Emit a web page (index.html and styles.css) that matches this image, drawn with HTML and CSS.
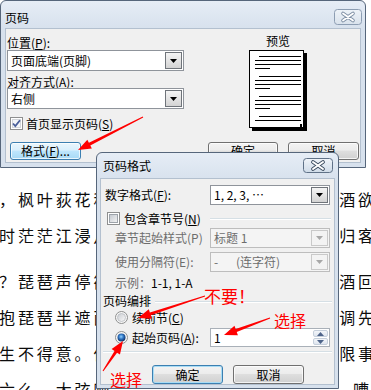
FILE: index.html
```html
<!DOCTYPE html>
<html lang="zh-CN">
<head>
<meta charset="utf-8">
<title>页码</title>
<link rel="stylesheet" href="styles.css">
</head>
<body>
<svg class="defs" width="0" height="0" aria-hidden="true">
  <defs>
    <linearGradient id="gBox" x1="0" y1="0" x2="1" y2="1">
      <stop offset="0" stop-color="#c3c8cf"/>
      <stop offset="1" stop-color="#f4f4f4"/>
    </linearGradient>
    <linearGradient id="gRadio" x1="0" y1="0" x2="1" y2="1">
      <stop offset="0" stop-color="#c9ccd1"/>
      <stop offset="1" stop-color="#fafafa"/>
    </linearGradient>
    <radialGradient id="gDot" cx="0.45" cy="0.4" r="0.6">
      <stop offset="0" stop-color="#8fd0ff"/>
      <stop offset="0.5" stop-color="#2f73c0"/>
      <stop offset="1" stop-color="#0f2f63"/>
    </radialGradient>
    <linearGradient id="gCloseA" x1="0" y1="0" x2="0" y2="1">
      <stop offset="0" stop-color="#f0f4f9"/>
      <stop offset="1" stop-color="#cfdbe8"/>
    </linearGradient>
    <linearGradient id="gCloseI" x1="0" y1="0" x2="0" y2="1">
      <stop offset="0" stop-color="#eef3f8"/>
      <stop offset="1" stop-color="#d9e2ec"/>
    </linearGradient>
  </defs>
</svg>
<div class="screen">
  <div class="doc">
    <div class="para para-first">
      <div class="ln"><span>，枫叶荻花秋</span><span class="gap"></span><span>酒欲</span></div>
      <div class="ln"><span>时茫茫江浸月</span><span class="gap"></span><span>归客</span></div>
    </div>
    <div class="para">
      <div class="ln"><span>？琵琶声停欲</span><span class="gap"></span><span>酒回</span></div>
      <div class="ln"><span>抱琵琶半遮面</span><span class="gap"></span><span>调先</span></div>
      <div class="ln"><span>生不得意。低</span><span class="gap"></span><span>限事</span></div>
      <div class="ln"><span>六么。大弦嘈</span><span class="gap gap-wide"></span><span>嘈</span></div>
    </div>
  </div>

  <section class="win win-page">
    <header class="titlebar">
      <span class="title">页码</span>
      <span class="close close-inactive">
        <svg width="28" height="16" viewBox="0 0 28 16">
          <rect x="0.5" y="0.5" width="27" height="15" rx="3" fill="url(#gCloseI)" stroke="#8c9db2"/>
          <path d="M9 4.5L19 11.5M19 4.5L9 11.5" stroke="#7d8ea3" stroke-width="3.6" stroke-linecap="round"/>
          <path d="M9 4.5L19 11.5M19 4.5L9 11.5" stroke="#fff" stroke-width="1.8" stroke-linecap="round"/>
        </svg>
      </span>
    </header>
    <div class="win-body page-body">
      <div class="page-grid">
        <div class="page-fields">
          <div class="lbl lbl-first">位置(<u>P</u>):</div>
          <div class="combo">
            <span class="combo-text">页面底端(页脚)</span>
            <span class="drop"><svg width="7" height="4" viewBox="0 0 7 4"><polygon points="0,0 7,0 3.5,4" fill="#000"/></svg></span>
          </div>
          <div class="lbl lbl-second">对齐方式(<u>A</u>):</div>
          <div class="combo">
            <span class="combo-text">右侧</span>
            <span class="drop"><svg width="7" height="4" viewBox="0 0 7 4"><polygon points="0,0 7,0 3.5,4" fill="#000"/></svg></span>
          </div>
          <div class="check-row">
            <svg class="chk" width="13" height="13" viewBox="0 0 13 13">
              <rect x="0.5" y="0.5" width="12" height="12" fill="#fff" stroke="#8e8f8f"/>
              <rect x="2.5" y="2.5" width="8" height="8" fill="#f4f6f8" stroke="#d3d6da"/>
              <path d="M3 6.5L5.3 9L10 3.2" stroke="#4a5f9a" stroke-width="1.8" fill="none"/>
            </svg>
            <span>首页显示页码(<u>S</u>)</span>
          </div>
        </div>
        <div class="preview">
          <div class="preview-title">预览</div>
          <svg class="preview-page" width="58" height="81" viewBox="0 0 58 81">
            <rect x="3" y="3" width="55" height="78" fill="#000"/>
            <rect x="0.5" y="0.5" width="54" height="77" fill="#fff" stroke="#000"/>
            <path d="M10 6.5H52M6 10.5H52M6 14.5H52M6 18.5H21M10 26.5H52M6 30.5H52M6 34.5H52M6 38.5H21M10 46.5H52M6 50.5H52M6 54.5H52M6 58.5H21M10 66.5H52M6 70.5H52" stroke="#000" stroke-width="1"/>
            <rect x="51" y="74" width="2" height="3" fill="#000"/>
          </svg>
        </div>
      </div>
      <div class="btn-row">
        <button class="btn btn-hot">格式(<u>F</u>)...</button>
        <span class="spacer"></span>
        <button class="btn">确定</button>
        <button class="btn">取消</button>
      </div>
    </div>
  </section>

  <section class="win win-fmt">
    <header class="titlebar">
      <span class="title">页码格式</span>
      <span class="close close-active">
        <svg width="30" height="15" viewBox="0 0 30 15">
          <rect x="0.5" y="0.5" width="29" height="14" rx="3" fill="url(#gCloseA)" stroke="#5f7187"/>
          <path d="M10 4L20 11M20 4L10 11" stroke="#3a4a5e" stroke-width="3.8" stroke-linecap="round"/>
          <path d="M10 4L20 11M20 4L10 11" stroke="#fff" stroke-width="2" stroke-linecap="round"/>
        </svg>
      </span>
    </header>
    <div class="win-body fmt-body">
      <div class="fmt-row row-num">
        <span class="lbl ind-4">数字格式(<u>F</u>):</span>
        <div class="combo">
          <span class="combo-text">1, 2, 3, …</span>
          <span class="drop"><svg width="7" height="4" viewBox="0 0 7 4"><polygon points="0,0 7,0 3.5,4" fill="#000"/></svg></span>
        </div>
      </div>
      <div class="fmt-row row-chk">
        <span class="opt ind-6">
          <svg class="chk" width="13" height="13" viewBox="0 0 13 13">
            <rect x="0.5" y="0.5" width="12" height="12" fill="#fff" stroke="#8e8f8f"/>
            <rect x="2.5" y="2.5" width="8" height="8" fill="url(#gBox)" stroke="#9da3aa"/>
          </svg>
          <span>包含章节号(<u>N</u>)</span>
        </span>
        <span class="rule"></span>
      </div>
      <div class="fmt-row row-dis">
        <span class="lbl ind-14 dim">章节起始样式(P)</span>
        <div class="combo combo-dis">
          <span class="combo-text">标题 1</span>
          <span class="drop"><svg width="7" height="4" viewBox="0 0 7 4"><polygon points="0,0 7,0 3.5,4" fill="#a7a7a7"/></svg></span>
        </div>
      </div>
      <div class="fmt-row row-dis2">
        <span class="lbl ind-14 dim">使用分隔符(E):</span>
        <div class="combo combo-dis">
          <span class="combo-text"><span class="dash">-</span>(连字符)</span>
          <span class="drop"><svg width="7" height="4" viewBox="0 0 7 4"><polygon points="0,0 7,0 3.5,4" fill="#a7a7a7"/></svg></span>
        </div>
      </div>
      <div class="lbl example ind-14"><span class="dim">示例：</span>1-1, 1-A</div>
      <div class="group-head">
        <span class="lbl">页码编排</span>
        <span class="rule"></span>
      </div>
      <div class="opt radio-row ind-14">
        <svg class="radio" width="13" height="13" viewBox="0 0 13 13">
          <circle cx="6.5" cy="6.5" r="6" fill="#f6f6f6" stroke="#8e8f8f"/>
          <circle cx="6.5" cy="6.5" r="4" fill="url(#gRadio)" stroke="#b9bdc2" stroke-width="0.8"/>
        </svg>
        <span>续前节(<u>C</u>)</span>
      </div>
      <div class="fmt-row row-start">
        <span class="opt ind-14">
          <svg class="radio" width="13" height="13" viewBox="0 0 13 13">
            <circle cx="6.5" cy="6.5" r="6" fill="#f6f6f6" stroke="#8e8f8f"/>
            <circle cx="6.5" cy="6.5" r="4" fill="url(#gDot)"/>
          </svg>
          <span>起始页码(<u>A</u>):</span>
        </span>
        <div class="spin">
          <span class="spin-text">1</span>
          <span class="spin-btns">
            <span class="sb"><svg width="7" height="4" viewBox="0 0 7 4"><polygon points="0,4 7,4 3.5,0" fill="#4e648a"/></svg></span>
            <span class="sb"><svg width="7" height="4" viewBox="0 0 7 4"><polygon points="0,0 7,0 3.5,4" fill="#4e648a"/></svg></span>
          </span>
        </div>
      </div>
      <div class="sep"></div>
      <div class="btn-row fmt-btns">
        <button class="btn btn-default">确定</button>
        <button class="btn">取消</button>
      </div>
    </div>
  </section>

  <svg class="annot" width="371" height="390" viewBox="0 0 371 390">
    <g fill="#ff0000">
      <polygon points="142.77,116.55 88.91,142.77 87.33,139.65 78,150 91.85,148.57 90.27,145.45 143.23,117.45"/>
      <polygon points="204.84,295.52 149.88,312.52 148.79,309.19 138,318 151.91,318.69 150.82,315.37 205.16,296.48"/>
      <polygon points="269.83,317.53 235.67,329.08 234.46,325.80 224,335 237.92,335.18 236.71,331.90 270.17,318.47"/>
      <polygon points="103.42,371.28 117.04,352.65 119.95,354.59 123,341 111.63,349.05 114.54,350.99 102.58,370.72"/>
    </g>
  </svg>
  <span class="note note-no">不要！</span>
  <span class="note note-pick1">选择</span>
  <span class="note note-pick2">选择</span>
</div>
</body>
</html>
```
FILE: styles.css
```css
* { box-sizing: border-box; margin: 0; padding: 0; }
html, body { width: 371px; height: 390px; overflow: hidden; background: #fff; }
body {
  font-family: "Noto Sans CJK SC", "Noto Sans", sans-serif;
  font-size: 12px;
  color: #000;
}
.defs { position: absolute; width: 0; height: 0; }
.screen { position: relative; width: 371px; height: 390px; overflow: hidden; }

/* background document */
.doc {
  padding-top: 181px;
  margin-left: -1px;
  font-size: 16px;
  letter-spacing: 2.9px;
  line-height: 36px;
  white-space: nowrap;
  color: #0c0c0c;
}
.para-first { margin-bottom: 10px; }
.ln { display: block; }
.gap { display: inline-block; width: 226.8px; }
.gap-wide { width: 240.6px; }

/* windows */
.win {
  position: absolute;
  display: flex;
  flex-direction: column;
  border: 1px solid #56667b;
  border-radius: 6px 6px 0 0;
  background: linear-gradient(#e6edf6, #d7e1ed 28px, #d7e1ed);
}
.win-page { left: 0; top: 0; width: 366px; height: 168px; padding: 0 4px 4px; }
.win-fmt { left: 96px; top: 152px; width: 243px; height: 237px; padding: 0 3px 3px; }

.titlebar { display: flex; justify-content: space-between; flex: none; }
.title { line-height: 14px; height: 14px; white-space: nowrap; }
.close { display: block; line-height: 0; }
.win-page .titlebar { height: 27px; align-items: flex-end; padding-bottom: 3px; }
.win-page .close { margin-right: -1px; }
.win-fmt .titlebar { height: 25px; align-items: center; padding-left: 3px; }
.win-fmt .close { margin-right: 2px; }

.win-body {
  flex: 1;
  background: #f0f0f0;
  border: 1px solid #b3c0cf;
  display: flex;
  flex-direction: column;
}

/* common controls */
.lbl { display: block; line-height: 14px; height: 14px; white-space: nowrap; }
.dim { color: #6d6d6d; }
u { text-decoration: underline; text-underline-offset: 1px; }

.combo {
  display: flex;
  align-items: stretch;
  height: 21px;
  border: 1px solid #8f949b;
  background: #fff;
}
.combo-text { flex: 1; padding-left: 3px; line-height: 19px; white-space: nowrap; overflow: hidden; }
.drop {
  width: 17px;
  margin: 1px;
  border: 1px solid #6f747a;
  background: linear-gradient(#f4f4f4, #e4e4e4 50%, #d3d3d3);
  display: flex;
  align-items: center;
  justify-content: center;
}
.combo-dis { border-color: #bdbdbd; background: #f4f4f4; color: #6d6d6d; }
.combo-dis .drop { border-color: #c9c9c9; background: #f3f3f3; }
.dash { display: inline-block; width: 22px; }

.btn {
  height: 18px;
  font: 12px/16px "Noto Sans CJK SC", sans-serif;
  color: #000;
  border: 1px solid #707070;
  border-radius: 3px;
  background: linear-gradient(#f3f3f3, #ececec 45%, #dedede 50%, #d0d0d0);
  box-shadow: inset 0 0 0 1px rgba(255, 255, 255, 0.75);
  width: 71px;
}
.btn-hot {
  border-color: #3c7fb1;
  background: linear-gradient(#eaf6fd, #d9effc 45%, #bee6fd 50%, #a7d9f5);
}
.btn-default {
  border-color: #3c7fb1;
  box-shadow: inset 0 0 0 1px #a8dcf5;
}

.chk, .radio { display: block; flex: none; }
.opt { display: flex; align-items: center; gap: 4px; white-space: nowrap; }

/* page dialog */
.page-body { padding: 7px 1px 0 1px; }
.page-grid { display: grid; grid-template-columns: 177px 58px; column-gap: 65px; }
.page-fields { display: flex; flex-direction: column; }
.lbl-second { margin-top: 4px; height: 13px; line-height: 13px; }
.check-row { display: flex; align-items: center; gap: 3px; margin-top: 8px; height: 13px; padding-left: 3px; white-space: nowrap; }
.preview { display: flex; flex-direction: column; align-items: center; }
.preview-title { line-height: 14px; height: 14px; margin-top: -2px; }
.preview-page { display: block; margin-top: 2px; }
.btn-row { display: flex; align-items: center; gap: 10px; }
.page-body .btn-row { margin-top: 11px; padding-left: 3px; }
.spacer { flex: 1; }
.page-body .btn-row .btn:nth-of-type(2) { width: 70px; }

/* format dialog */
.fmt-body { padding-top: 6px; }
.fmt-row { display: grid; grid-template-columns: 109px 120px; align-items: center; }
.ind-4 { padding-left: 4px; }
.ind-6 { padding-left: 6px; }
.ind-14 { padding-left: 14px; }
.row-num { height: 20px; }
.row-num .combo, .row-dis .combo, .row-dis2 .combo { height: 20px; }
.row-num .combo-text, .row-dis .combo-text, .row-dis2 .combo-text { line-height: 18px; }
.row-chk { margin-top: 5px; height: 13px; }
.rule { display: block; height: 2px; border-top: 1px solid #d5dfe5; border-bottom: 1px solid #fff; }
.row-chk .rule { margin-right: -1px; }
.row-dis { margin-top: 5px; height: 20px; }
.row-dis2 { margin-top: 4px; height: 20px; }
.example { margin-top: 4px; }
.group-head { display: flex; align-items: center; margin-top: 4px; height: 14px; padding-left: 2px; padding-right: 2px; }
.group-head .rule { flex: 1; margin-left: 4px; margin-top: 1px; }
.radio-row { margin-top: 3px; height: 13px; }
.row-start { margin-top: 4px; height: 19px; }
.spin {
  display: flex;
  height: 19px;
  border: 1px solid #a9b0b8;
  background: #fff;
}
.spin-text { flex: 1; padding-left: 3px; line-height: 17px; }
.spin-btns { width: 17px; display: flex; flex-direction: column; padding: 1px; gap: 1px; }
.sb {
  flex: 1;
  display: flex;
  align-items: center;
  justify-content: center;
  border: 1px solid #c5cfdb;
  border-radius: 2px;
  background: linear-gradient(#f3f6fa, #dfe6ef);
}
.sep { margin: 4px 2px 0 2px; height: 2px; border-top: 1px solid #d5dfe5; border-bottom: 1px solid #fff; }
.fmt-btns { margin-top: 12px; padding-left: 51px; }
.fmt-btns .btn { height: 19px; line-height: 17px; }

/* annotations */
.annot { position: absolute; left: 0; top: 0; pointer-events: none; }
.note {
  position: absolute;
  color: #ff0000;
  font-size: 16px;
  line-height: 16px;
  white-space: nowrap;
}
.note-no { left: 204px; top: 287px; font-size: 17px; line-height: 17px; }
.note-pick1 { left: 274px; top: 312px; }
.note-pick2 { left: 110px; top: 371px; }
```
